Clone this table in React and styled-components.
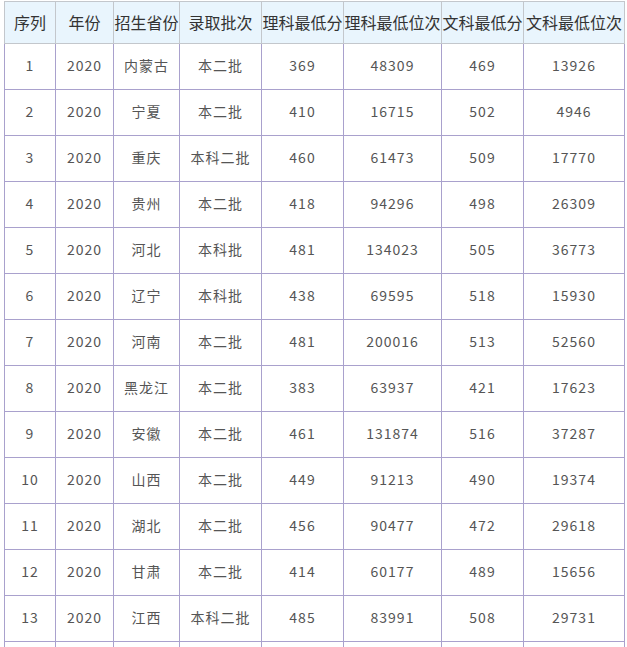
import React from "react";
import styled, { createGlobalStyle } from "styled-components";

const GlobalStyle = createGlobalStyle`
  html, body {
    margin: 0;
    padding: 0;
    background: #ffffff;
  }
  body {
    padding: 1px 0 0 4px;
    font-family: "Noto Sans CJK SC", "Noto Sans", sans-serif;
  }
`;

const Table = styled.table`
  width: 620px;
  table-layout: fixed;
  border-collapse: collapse;
  text-align: center;
`;

const HeadCell = styled.th`
  height: 39px;
  padding: 0 0 2px 0;
  background: #e9f5fd;
  border: 1px solid #c3c7cc;
  color: #333333;
  font-size: 16px;
  font-weight: normal;
  white-space: nowrap;
  overflow: hidden;
`;

const Cell = styled.td`
  height: 42px;
  padding: 0 0 3px 0;
  border: 1px solid #a9a1cd;
  color: #555555;
  font-size: 14px;
  letter-spacing: 1px;
  white-space: nowrap;
`;

// column widths read off the screenshot grid lines
const columns = [
  { label: "序列", width: 51 },
  { label: "年份", width: 58 },
  { label: "招生省份", width: 66 },
  { label: "录取批次", width: 82 },
  { label: "理科最低分", width: 82 },
  { label: "理科最低位次", width: 98 },
  { label: "文科最低分", width: 82 },
  { label: "文科最低位次", width: 101 },
];

const rows = [
  ["1", "2020", "内蒙古", "本二批", "369", "48309", "469", "13926"],
  ["2", "2020", "宁夏", "本二批", "410", "16715", "502", "4946"],
  ["3", "2020", "重庆", "本科二批", "460", "61473", "509", "17770"],
  ["4", "2020", "贵州", "本二批", "418", "94296", "498", "26309"],
  ["5", "2020", "河北", "本科批", "481", "134023", "505", "36773"],
  ["6", "2020", "辽宁", "本科批", "438", "69595", "518", "15930"],
  ["7", "2020", "河南", "本二批", "481", "200016", "513", "52560"],
  ["8", "2020", "黑龙江", "本二批", "383", "63937", "421", "17623"],
  ["9", "2020", "安徽", "本二批", "461", "131874", "516", "37287"],
  ["10", "2020", "山西", "本二批", "449", "91213", "490", "19374"],
  ["11", "2020", "湖北", "本二批", "456", "90477", "472", "29618"],
  ["12", "2020", "甘肃", "本二批", "414", "60177", "489", "15656"],
  ["13", "2020", "江西", "本科二批", "485", "83991", "508", "29731"],
  ["", "", "", "", "", "", "", ""],
];

const App = () => {
  return (
    <>
      <GlobalStyle />
      <Table>
        <colgroup>
          {columns.map((c) => (
            <col key={c.label} style={{ width: c.width + "px" }} />
          ))}
        </colgroup>
        <thead>
          <tr>
            {columns.map((c) => (
              <HeadCell key={c.label}>{c.label}</HeadCell>
            ))}
          </tr>
        </thead>
        <tbody>
          {rows.map((row, i) => (
            <tr key={i}>
              {row.map((v, j) => (
                <Cell key={j}>{v}</Cell>
              ))}
            </tr>
          ))}
        </tbody>
      </Table>
    </>
  );
};

export default App;
